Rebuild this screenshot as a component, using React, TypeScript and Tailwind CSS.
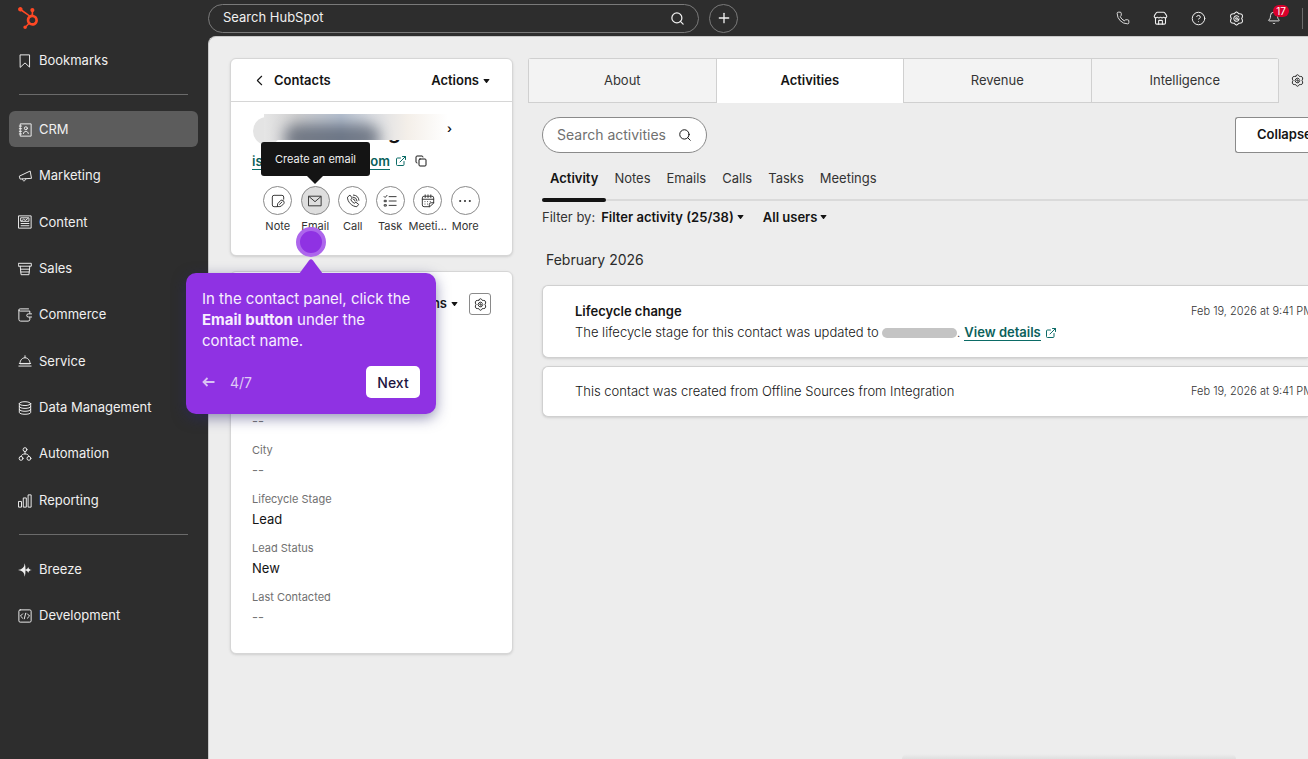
import React from 'react';
import { Bell, ChevronLeft, CircleHelp, Copy, ExternalLink, Phone, Plus, Search, Store } from 'lucide-react';
import { FaHubspot } from 'react-icons/fa';

interface IconProps {
    size?: number;
    children: React.ReactNode;
}

// Small line icons share a 16 unit grid
const Line: React.FC<IconProps> = ({ size = 14, children }) => (
    <svg
        width={size}
        height={size}
        viewBox="0 0 16 16"
        fill="none"
        stroke="currentColor"
        strokeWidth="1.1"
        strokeLinecap="round"
        strokeLinejoin="round"
        className="shrink-0"
        aria-hidden="true"
    >
        {children}
    </svg>
);

const Gear = ({ size = 14 }: { size?: number }) => (
    <Line size={size}>
        <path d="M6.5 1.8 8 .9l1.5.9.7 1.1 1.4.1 1.9.4.8 1.2v1.7L13.5 8l.8 1.7v1.7l-.8 1.2-1.9.4-1.4.1-.7 1.1-1.5.9-1.5-.9-.7-1.1-1.4-.1-1.9-.4-.8-1.2V9.7L2.5 8l-.8-1.7V4.6l.8-1.2L4.4 3l1.4-.1z" />
        <path d="M10.4 6.4A2.9 2.9 0 1 0 10.6 9.4M8 8.9a.9.9 0 1 1 .9-.9c0 1.3 1.6 1.3 1.9.2" />
    </Line>
);

const Caret = () => (
    <svg width="7" height="4" viewBox="0 0 8 5" fill="currentColor" aria-hidden="true">
        <path d="M.8 0h6.4q.8.2.3.9L4.6 4.6q-.6.6-1.2 0L.5.9Q0 .2.8 0z" />
    </svg>
);

const navIcons: Record<string, React.ReactNode> = {
    Bookmarks: (
        <Line>
            <path d="M2.8 1h10.4v14L8 10.2 2.8 15z" />
        </Line>
    ),
    CRM: (
        <Line>
            <path d="M3 1h12v14H3zM1.5 3.5H4M1.5 6.5H4M1.5 9.500H4M1.5 12.5H4M6.2 12c.3-3.4 5.3-3.4 5.6 0" />
            <circle cx="9" cy="6" r="1.7" />
        </Line>
    ),
    Marketing: (
        <Line>
            <path d="M13.5 2.5 1.5 8.2l.9 3.3 12.6-.8zM5 11.5c0 3 3.8 2.7 3.9-.2" />
        </Line>
    ),
    Content: (
        <Line>
            <path d="M1 1h14v14H1zM3.500 3.200h9v4h-9zM3.800 7l2.700-2.300 1.800 1.500 2.700-2M3.500 9.700h9M3.500 12.300h9" />
        </Line>
    ),
    Sales: (
        <Line>
            <path d="M.8 1.5h14.4v3.3H.8zM2.5 4.8l1 9.7h9l1-9.7M3 8.2h10M3.3 11.4h9.4" />
        </Line>
    ),
    Commerce: (
        <Line>
            <path d="M13.5 6V3.5h-11Q1 3.500 1 2.200T2.500 1H12M1 2.500V13q0 2 2 2h8.500q2 0 2-2v-2" />
            <path d="M15.5 6.7h-3.7a1.8 1.8 0 0 0 0 3.6h3.700" />
        </Line>
    ),
    Service: (
        <Line>
            <path d="M2.300 10.800C2.300 2 13.700 2 13.700 10.800zM1 13.800h14M1.500 10.800h13M8 4.200V2" />
        </Line>
    ),
    'Data Management': (
        <Line>
            <ellipse cx="8" cy="3" rx="6.5" ry="2.2" />
            <path d="M1.500 3v10c0 2.900 13 2.900 13 0V3M1.500 6.400c0 2.900 13 2.900 13 0M1.500 9.700c0 2.900 13 2.900 13 0" />
        </Line>
    ),
    Automation: (
        <Line>
            <circle cx="8" cy="3" r="2.2" />
            <circle cx="3.5" cy="13" r="2.2" />
            <circle cx="12.5" cy="13" r="2.2" />
            <path d="M8 5.200v2.600M3.500 10.800c0-4 9-4 9 0" />
        </Line>
    ),
    Reporting: (
        <Line>
            <path d="M1 8.500h3V15H1zM6.500 4.500h3V15h-3zM12 1h3v14h-3z" />
        </Line>
    ),
    Breeze: (
        <svg width="14" height="14" viewBox="0 0 16 16" fill="currentColor" className="shrink-0" aria-hidden="true">
            <path d="M7.500.3Q7.700 7 0 8q7.700 1 7.500 7.700Q8.600 13.500 8.600 8T7.500.3z" />
            <path d="M11.800 4.500Q12 7.600 16 8q-4 .4-4.200 3.500Q11.200 8.600 7.500 8q3.700-.6 4.300-3.500z" />
        </svg>
    ),
    Development: (
        <Line>
            <rect x="1" y="1" width="14" height="14" rx="1.5" />
            <path d="M5.300 5.500 2.800 8l2.500 2.500M10.700 5.500 13.200 8l-2.500 2.500M8.800 4.800 7.200 11.200" />
        </Line>
    ),
};

const mainNav = ['CRM', 'Marketing', 'Content', 'Sales', 'Commerce', 'Service', 'Data Management', 'Automation', 'Reporting'];
const extraNav = ['Breeze', 'Development'];

const NavItem = ({ label, active = false }: { label: string; active?: boolean }) => (
    <a
        href="#"
        className={`flex h-9 items-center gap-[7px] rounded-md pt-px pl-[9px] text-[13px] ${active ? 'bg-[#5c5c5c]' : ''}`}
    >
        {navIcons[label]}
        {label}
    </a>
);

const Sidebar = () => (
    <nav className="w-52 shrink-0 pt-[6px] pr-[10px] pl-[9px] text-[#f0f0f0]">
        <NavItem label="Bookmarks" />
        <hr className="mx-[10px] my-4 border-[#6b6b6b]" />
        <div className="flex h-[407px] flex-col justify-between">
            {mainNav.map((label) => (
                <NavItem key={label} label={label} active={label === 'CRM'} />
            ))}
        </div>
        <hr className="mx-[10px] my-4 border-[#6b6b6b]" />
        <div className="flex flex-col gap-[10px]">
            {extraNav.map((label) => (
                <NavItem key={label} label={label} />
            ))}
        </div>
    </nav>
);

const TopBar = () => (
    <header className="flex h-9 shrink-0 items-center text-[#f0f0f0]">
        <a href="#" aria-label="Home" className="w-[208px] pl-[17px] text-[#ff4824]">
            <FaHubspot size={22} />
        </a>
        <label className="flex h-[29px] w-[491px] items-center rounded-full border border-[#7a7a7a] pr-[13px] pl-[14px]">
            <input
                type="text"
                aria-label="Search HubSpot"
                placeholder="Search HubSpot"
                className="min-w-0 flex-1 bg-transparent text-[13px] outline-none placeholder:text-[#f0f0f0]"
            />
            <Search size={15} strokeWidth={2} />
        </label>
        <button aria-label="Create" className="ml-[10px] flex h-[29px] w-[29px] items-center justify-center rounded-full border border-[#7a7a7a]">
            <Plus size={16} />
        </button>
        <div className="ml-auto flex items-center gap-[23px]">
            <button aria-label="Calls"><Phone size={14} strokeWidth={1.5} /></button>
            <button aria-label="Marketplace"><Store size={15} strokeWidth={1.7} /></button>
            <button aria-label="Help"><CircleHelp size={15} strokeWidth={1.6} /></button>
            <button aria-label="Settings"><Gear size={15} /></button>
            <button aria-label="Notifications" className="relative">
                <Bell size={14} strokeWidth={1.6} />
                <span className="absolute -top-[6px] left-[6px] flex h-3 w-4 items-center justify-center rounded-full bg-[#d9002b] text-[10px] text-white">
                    17
                </span>
            </button>
        </div>
        <span className="mr-[5px] ml-[21px] h-[21px] w-px bg-[#6b6b6b]" />
    </header>
);

const quickActions = [
    {
        label: 'Note',
        icon: (
            <Line>
                <path d="M7 14.500H3.500q-2 0-2-2v-9q0-2 2-2h9q2 0 2 2V6M7.300 14.300l.3-3.200 3.600-3.900 1.300-.2q2.400.2 2.500 2.600l-.3 1.300-3 3q-2.400 1-4.400.4zM9.800 11.800l2.700-2.600" />
            </Line>
        ),
    },
    {
        label: 'Email',
        icon: (
            <Line>
                <path d="M1 2.500h14v11H1zM1.300 3 8 8.800 14.700 3" />
            </Line>
        ),
    },
    {
        label: 'Call',
        icon: (
            <Line>
                <path d="M4.200 1.500 1.700 3.600C1.500 9 7 14.500 12.400 14.500l2.100-2.600-3.200-2.500-1.800 1.200q-2.800-1.400-4-4l1.300-1.700zM8 3.500q4.300.2 4.700 4.500M8.500 1.200q5.800.3 6.300 6M8.200 5.800q2 .2 2.200 2.200" />
            </Line>
        ),
    },
    {
        label: 'Task',
        icon: (
            <Line>
                <path d="M7 3h8M7 8h8M7 13h8M1.200 2.800l1.200 1.200L4.600 1.500M1.800 7.200h2v1.600h-2zM1.800 12.200h2v1.600h-2z" />
            </Line>
        ),
    },
    {
        label: 'Meeti...',
        icon: (
            <Line>
                <path d="M9.500 14.500h-6q-2 0-2-2v-8q0-2 2-2h9q2 0 2 2V10zM14.500 10h-3q-2 0-2 2v2.500M1.500 6h13M4.800 1v3M8 1v3M11.200 1v3M4.500 8.700h.1M7.500 8.700h.1M10.500 8.700h.1M4.500 11.500h.1M7.500 11.500h.1" />
            </Line>
        ),
    },
    {
        label: 'More',
        icon: (
            <svg width="14" height="14" viewBox="0 0 16 16" fill="currentColor" aria-hidden="true">
                <circle cx="2.5" cy="8" r="1.2" />
                <circle cx="8" cy="8" r="1.2" />
                <circle cx="13.5" cy="8" r="1.2" />
            </svg>
        ),
    },
];

const ContactCard = () => (
    <section className="h-[198px] rounded-md border border-[#d6d6d6] bg-white shadow-sm">
        <div className="flex h-[43px] items-center justify-between border-b border-[#d6d6d6] pt-px pr-[22px] pl-5 font-semibold">
            <a href="#" className="flex items-center gap-[6px]">
                <ChevronLeft size={17} strokeWidth={1.5} />
                Contacts
            </a>
            <button className="flex items-center gap-1">
                Actions <Caret />
            </button>
        </div>
        <div className="relative h-[49px]">
            <span className="absolute top-[15px] left-[22px] h-7 w-7 rounded-full bg-[#e4e4e4]" />
            <span className="absolute top-[18px] left-[157px] text-xl leading-6 font-bold">g</span>
            <span className="absolute top-3 left-[33px] h-[26px] w-[184px] overflow-hidden bg-[linear-gradient(90deg,#e6e6e6_0%,#cfcfd0_18%,#b7c2d2_42%,#d9dce1_58%,#f4efe9_78%,#ffffff_100%)]">
                <span className="absolute -bottom-3 left-5 h-7 w-24 rounded-full bg-[#4d5666] opacity-70 blur-[7px]" />
            </span>
            <span className="absolute top-[17px] left-[216px] text-xs leading-5 font-semibold">›</span>
        </div>
        <div className="flex h-5 items-center gap-[5px] pl-[21px]">
            <a href="#" className="flex w-[138px] justify-between border-b border-[#0b6b66] leading-4 font-semibold text-[#0b5f5b]">
                <span>is</span>
                <span>.com</span>
            </a>
            <ExternalLink size={12} className="text-[#0b6b66]" />
            <button aria-label="Copy email" className="ml-[3px]">
                <Copy size={12} strokeWidth={2} />
            </button>
        </div>
        <div className="mx-7 mt-[15px] grid grid-cols-6">
            {quickActions.map(({ label, icon }) => (
                <button key={label} className="flex flex-col items-center gap-[3px] text-[11px] leading-4 whitespace-nowrap text-[#333]">
                    <span
                        className={`flex h-[29px] w-[29px] items-center justify-center rounded-full border border-[#8a8a8a] ${label === 'Email' ? 'bg-[#dedede]' : 'bg-white'}`}
                    >
                        {icon}
                    </span>
                    {label}
                </button>
            ))}
        </div>
    </section>
);

const fields = [
    { label: 'City', value: '--' },
    { label: 'Lifecycle Stage', value: 'Lead' },
    { label: 'Lead Status', value: 'New' },
    { label: 'Last Contacted', value: '--' },
];

const AboutCard = () => (
    <section className="rounded-md border border-[#d6d6d6] bg-white px-[21px] pt-[21px] pb-[26px] shadow-sm">
        <div className="flex items-center justify-end gap-[11px]">
            <button className="flex items-center gap-1 font-semibold">
                Actions <Caret />
            </button>
            <button aria-label="Card settings" className="flex h-[22px] w-[22px] items-center justify-center rounded-[3px] border border-[#8a8a8a]">
                <Gear size={13} />
            </button>
        </div>
        <dl className="mt-24 flex flex-col gap-[9px] leading-5">
            <dd className="text-[#777]">--</dd>
            {fields.map(({ label, value }) => (
                <div key={label}>
                    <dt className="text-[11px] leading-5 text-[#707070]">{label}</dt>
                    <dd className={value === '--' ? 'text-[#777]' : ''}>{value}</dd>
                </div>
            ))}
        </dl>
    </section>
);

const pageTabs = ['About', 'Activities', 'Revenue', 'Intelligence'];
const activityTabs = ['Activity', 'Notes', 'Emails', 'Calls', 'Tasks', 'Meetings'];

const ActivityColumn = () => (
    <div className="min-w-0 flex-1">
        <div className="flex items-center">
            <div className="flex h-[45px] flex-1 rounded-t-[3px] border-t border-l border-[#d0d0d0]">
                {pageTabs.map((tab) => (
                    <button
                        key={tab}
                        className={`flex-1 border-r ${tab === 'Activities' ? 'border-[#d0d0d0] bg-white font-semibold' : 'border-b border-[#d0d0d0] bg-[#f3f3f3] text-[#333]'}`}
                    >
                        {tab}
                    </button>
                ))}
            </div>
            <button aria-label="Customize tabs" className="w-[29px] pl-3">
                <Gear size={13} />
            </button>
        </div>

        <div className="pt-[14px] pl-[14px]">
            <div className="flex items-center justify-between">
                <label className="flex h-9 w-[165px] items-center rounded-full border border-[#8a8a8a] bg-white pr-[14px] pl-[14px]">
                    <input
                        type="text"
                        aria-label="Search activities"
                        placeholder="Search activities"
                        className="min-w-0 flex-1 bg-transparent text-sm outline-none placeholder:text-[#707070]"
                    />
                    <Search size={14} strokeWidth={1.7} />
                </label>
                <button className="h-9 w-[73px] overflow-hidden rounded-l-[3px] border border-r-0 border-[#8a8a8a] bg-white pl-[21px] text-left font-semibold">
                    Collapse
                </button>
            </div>

            <div className="mt-[15px] flex border-b-2 border-[#dadada]">
                {activityTabs.map((tab) => (
                    <button
                        key={tab}
                        className={`relative px-2 pb-[11px] leading-5 ${tab === 'Activity' ? 'font-semibold' : 'text-[#333]'}`}
                    >
                        {tab}
                        {tab === 'Activity' && <span className="absolute -bottom-[3px] left-0 h-1 w-full rounded-full bg-[#141414]" />}
                    </button>
                ))}
            </div>

            <div className="mt-[6px] flex items-center leading-5">
                <span className="text-[#333]">Filter by:</span>
                <button className="ml-[6px] flex items-center gap-[3px] font-semibold">
                    Filter activity (25/38) <Caret />
                </button>
                <button className="ml-[19px] flex items-center gap-[3px] font-semibold">
                    All users <Caret />
                </button>
            </div>

            <h2 className="mt-[23px] pl-1 text-sm leading-5 text-[#2b2b2b]">February 2026</h2>

            <div className="mt-[15px] flex flex-col gap-2">
                <article className="flex justify-between rounded-l-md border border-r-0 border-[#d0d0d0] bg-white pt-[15px] pb-[14px] pl-8 shadow-sm">
                    <div className="leading-[21px]">
                        <h3 className="font-semibold">Lifecycle change</h3>
                        <p className="flex items-center font-light whitespace-nowrap">
                            The lifecycle stage for this contact was updated to
                            <span className="ml-[3px] h-[10px] w-[75px] rounded-full bg-[#c4c4c4]" />.
                            <a href="#" className="ml-1 border-b border-[#0b6b66] leading-4 font-semibold text-[#0b5f5b]">
                                View details
                            </a>
                            <ExternalLink size={12} className="ml-1 text-[#0b6b66]" />
                        </p>
                    </div>
                    <time className="w-[117px] text-[11px] leading-[21px] font-light whitespace-nowrap text-[#333]">Feb 19, 2026 at 9:41 PM</time>
                </article>
                <article className="flex justify-between rounded-l-md border border-r-0 border-[#d0d0d0] bg-white py-[14px] pl-8 leading-[21px] shadow-sm">
                    <p className="font-light">This contact was created from Offline Sources from Integration</p>
                    <time className="w-[117px] text-[11px] leading-[21px] font-light whitespace-nowrap text-[#333]">Feb 19, 2026 at 9:41 PM</time>
                </article>
            </div>
        </div>
    </div>
);

const EmailTooltip = () => (
    <div role="tooltip" className="absolute top-[142px] left-[261px] flex h-[34px] w-[109px] items-center justify-center rounded-[3px] bg-[#141414] text-[11px] text-[#f0f0f0]">
        Create an email
        <svg width="16" height="9" viewBox="0 0 16 9" className="absolute top-full left-[46px]" aria-hidden="true">
            <path d="M0 0h16L8 8z" fill="#141414" />
        </svg>
    </div>
);

const TourStep = () => (
    <>
        <span className="absolute top-[227px] left-[296px] h-[30px] w-[30px] rounded-full border-4 border-[#ad66ec] bg-[#8f32e3]" />
        <div
            role="dialog"
            aria-label="Tour step"
            className="absolute top-[273px] left-[186px] w-[250px] rounded-[10px] bg-[#8f32e3] px-4 pt-[15px] pb-4 text-sm leading-[21px] font-medium text-[#f7effe] shadow-[0_4px_14px_rgba(40,40,110,0.5)]"
        >
            <svg width="24" height="15" viewBox="0 0 24 15" className="absolute -top-[14px] left-[113px]" aria-hidden="true">
                <path d="M0 15 10 1.500q2-2.500 4 0L24 15z" fill="#8f32e3" />
            </svg>
            <p className="text-[15px] leading-[21px] font-normal">
                In the contact panel, click the <strong className="font-bold">Email button</strong> under the contact name.
            </p>
            <div className="mt-[15px] flex items-center">
                <button aria-label="Previous step" className="text-[#d9c2f3]">
                    <svg width="13" height="10" viewBox="0 0 13 10" fill="none" stroke="currentColor" strokeWidth="1.8" aria-hidden="true">
                        <path d="M12.500 5h-11M5.500 1l-4 4 4 4" />
                    </svg>
                </button>
                <span className="ml-[15px] font-normal text-[#dfcbf5]">4/7</span>
                <button className="ml-auto h-8 w-[54px] rounded-[5px] bg-white text-[#1c1440]">Next</button>
            </div>
        </div>
    </>
);

export default function App() {
    return (
        <div className="relative flex min-h-screen flex-col overflow-hidden bg-[#2d2d2d] font-['Inter','Liberation_Sans',sans-serif] text-[13px] text-[#141414]">
            <TopBar />
            <div className="flex flex-1">
                <Sidebar />
                <main className="relative flex min-w-0 flex-1 items-start gap-[15px] rounded-tl-lg border-t border-l border-[#c8c8c8] bg-[#ededed] pt-[21px] pl-[21px]">
                    <div className="flex w-[283px] shrink-0 flex-col gap-[15px]">
                        <ContactCard />
                        <AboutCard />
                    </div>
                    <ActivityColumn />
                    <span className="absolute right-[72px] bottom-0 h-[5px] w-[334px] rounded-t-full bg-gradient-to-t from-[#dfdfdf] to-[#ededed]" />
                </main>
            </div>
            <EmailTooltip />
            <TourStep />
        </div>
    );
}
